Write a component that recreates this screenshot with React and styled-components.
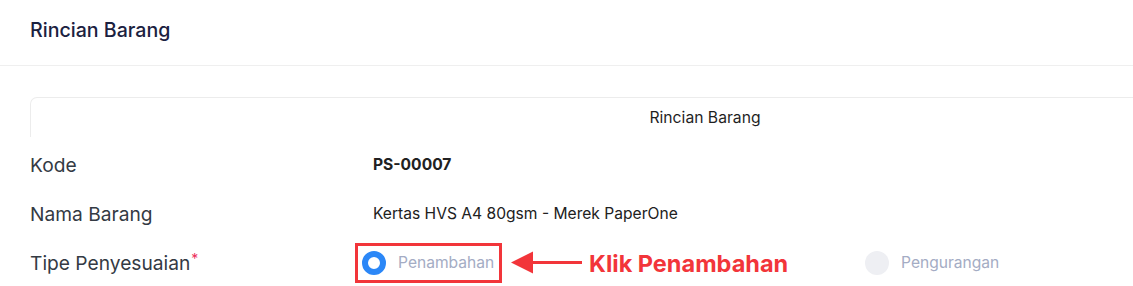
import React from "react";
import styled, { createGlobalStyle } from "styled-components";

const GlobalStyle = createGlobalStyle`
  html, body {
    margin: 0;
    padding: 0;
    background: #ffffff;
    overflow: hidden;
    font-family: Inter, "Noto Sans", sans-serif;
  }
`;

const Page = styled.div`
  width: 1133px;
  height: 286px;
  overflow: hidden;
`;

const Header = styled.header`
  height: 65px;
  padding: 0 30px;
  display: flex;
  align-items: center;
  border-bottom: 1px solid #efefef;
`;

const HeaderTitle = styled.h1`
  margin: 0 0 6px 0;
  font-size: 19.6px;
  font-weight: 500;
  color: #1b2140;
`;

const Content = styled.div`
  padding: 31px 0 0 30px;
`;

const CardHead = styled.div`
  width: 1350px;
  height: 40px;
  border: 1px solid #ececec;
  border-bottom: none;
  border-radius: 7px 7px 0 0;
  display: flex;
  align-items: center;
  justify-content: center;
  font-size: 15.7px;
  color: #1f1f1f;
  box-sizing: border-box;
`;

const Rows = styled.div`
  display: flex;
  flex-direction: column;
  padding-top: 3px;
`;

const Row = styled.div`
  display: grid;
  grid-template-columns: 343px 1fr;
  align-items: center;
  height: 49px;
`;

const Label = styled.div`
  font-size: 19.2px;
  color: #343a44;
`;

const Required = styled.sup`
  color: #ec2f5a;
  font-size: 14px;
  margin-left: 1px;
  vertical-align: 6px;
  line-height: 0;
`;

const Value = styled.div`
  font-size: 15.6px;
  color: #212121;
  font-weight: ${(p) => (p.$bold ? 700 : 400)};
`;

const RadioGroup = styled.div`
  display: flex;
  align-items: center;
  margin-left: -11px;
`;

const Option = styled.label`
  position: relative;
  display: flex;
  align-items: center;
  gap: 12px;
  width: ${(p) => p.$width}px;
`;

const Dot = styled.span`
  width: 24px;
  height: 24px;
  border-radius: 50%;
  box-sizing: border-box;
  flex-shrink: 0;
  background: ${(p) => (p.$checked ? "#ffffff" : "#eeeff3")};
  border: ${(p) => (p.$checked ? "6px solid #2b87f7" : "none")};
`;

const OptionText = styled.span`
  font-size: 15.6px;
  color: #a4acc4;
`;

const Highlight = styled.span`
  position: absolute;
  top: -8px;
  bottom: -8px;
  left: -7px;
  width: 147px;
  border: 3px solid #f2353a;
  box-sizing: border-box;
  pointer-events: none;
`;

const Callout = styled.span`
  position: absolute;
  left: 149px;
  top: 50%;
  transform: translateY(-50%);
  display: flex;
  align-items: center;
  gap: 7px;
  white-space: nowrap;
`;

const CalloutText = styled.span`
  font-size: 23.5px;
  font-weight: 700;
  color: #f2353a;
`;

function Arrow() {
  return (
    <svg width="71" height="24" viewBox="0 0 71 24">
      <path d="M0 12 L22 1 L22 23 Z" fill="#f2353a" />
      <rect x="20" y="10.5" width="51" height="3" fill="#f2353a" />
    </svg>
  );
}

export default function App() {
  return (
    <Page>
      <GlobalStyle />
      <Header>
        <HeaderTitle>Rincian Barang</HeaderTitle>
      </Header>
      <Content>
        <CardHead>Rincian Barang</CardHead>
        <Rows>
          <Row>
            <Label>Kode</Label>
            <Value $bold>PS-00007</Value>
          </Row>
          <Row>
            <Label>Nama Barang</Label>
            <Value>Kertas HVS A4 80gsm - Merek PaperOne</Value>
          </Row>
          <Row>
            <Label>
              Tipe Penyesuaian<Required>*</Required>
            </Label>
            <RadioGroup>
              <Option $width={503}>
                <Highlight />
                <Dot $checked />
                <OptionText>Penambahan</OptionText>
                <Callout>
                  <Arrow />
                  <CalloutText>Klik Penambahan</CalloutText>
                </Callout>
              </Option>
              <Option $width={200}>
                <Dot />
                <OptionText>Pengurangan</OptionText>
              </Option>
            </RadioGroup>
          </Row>
        </Rows>
      </Content>
    </Page>
  );
}
